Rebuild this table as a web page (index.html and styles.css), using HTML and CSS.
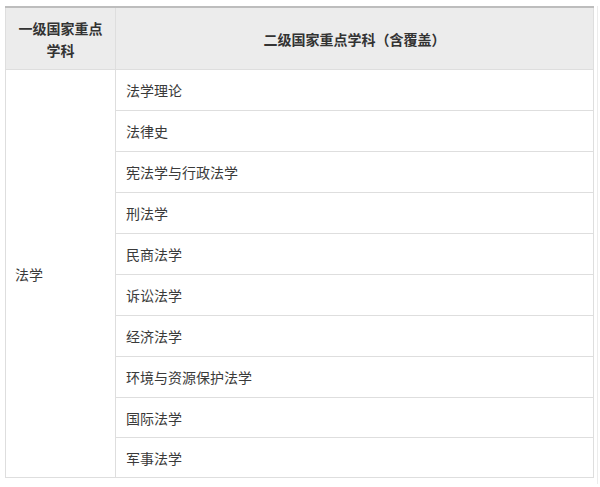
FILE: index.html
```html
<!DOCTYPE html>
<html lang="zh-CN">
<head>
<meta charset="utf-8">
<link rel="stylesheet" href="styles.css">
</head>
<body>
<div class="page">
  <table class="subjects">
    <thead>
      <tr>
        <th class="col-first">一级国家重点<br>学科</th>
        <th class="col-second">二级国家重点学科（含覆盖）</th>
      </tr>
    </thead>
    <tbody>
      <tr><td class="first" rowspan="10">法学</td><td>法学理论</td></tr>
      <tr><td>法律史</td></tr>
      <tr><td>宪法学与行政法学</td></tr>
      <tr><td>刑法学</td></tr>
      <tr><td>民商法学</td></tr>
      <tr><td>诉讼法学</td></tr>
      <tr><td>经济法学</td></tr>
      <tr><td>环境与资源保护法学</td></tr>
      <tr class="short"><td>国际法学</td></tr>
      <tr class="short"><td>军事法学</td></tr>
    </tbody>
  </table>
  <div class="edge"></div>
</div>
</body>
</html>
```
FILE: styles.css
```css
html, body {
  margin: 0;
  padding: 0;
  background: #fff;
}
.page {
  display: flex;
  align-items: flex-start;
  padding: 6px 0 0 5px;
  font-family: "Noto Sans CJK SC", "Microsoft YaHei", sans-serif;
  color: #3a3a3a;
}
.subjects {
  border-collapse: collapse;
  width: 589px;
  table-layout: fixed;
  font-size: 14px;
  border-top: 2px solid #bdbdbd;
}
.subjects th,
.subjects td {
  border: 1px solid #dedede;
  padding: 0 10px;
  line-height: 22px;
}
.subjects th {
  background: #ececec;
  font-weight: bold;
  text-align: center;
  height: 61px;
  color: #333;
}
.subjects .col-first {
  width: 110px;
  padding: 0 6px;
  box-sizing: border-box;
}
.subjects td {
  height: 41px;
  box-sizing: border-box;
  text-align: left;
}
.subjects .short td {
  height: 40px;
}
.subjects td.first {
  padding-left: 9px;
}
.edge {
  width: 1px;
  height: 478px;
  margin-left: 3px;
  background: #ececec;
}
```
